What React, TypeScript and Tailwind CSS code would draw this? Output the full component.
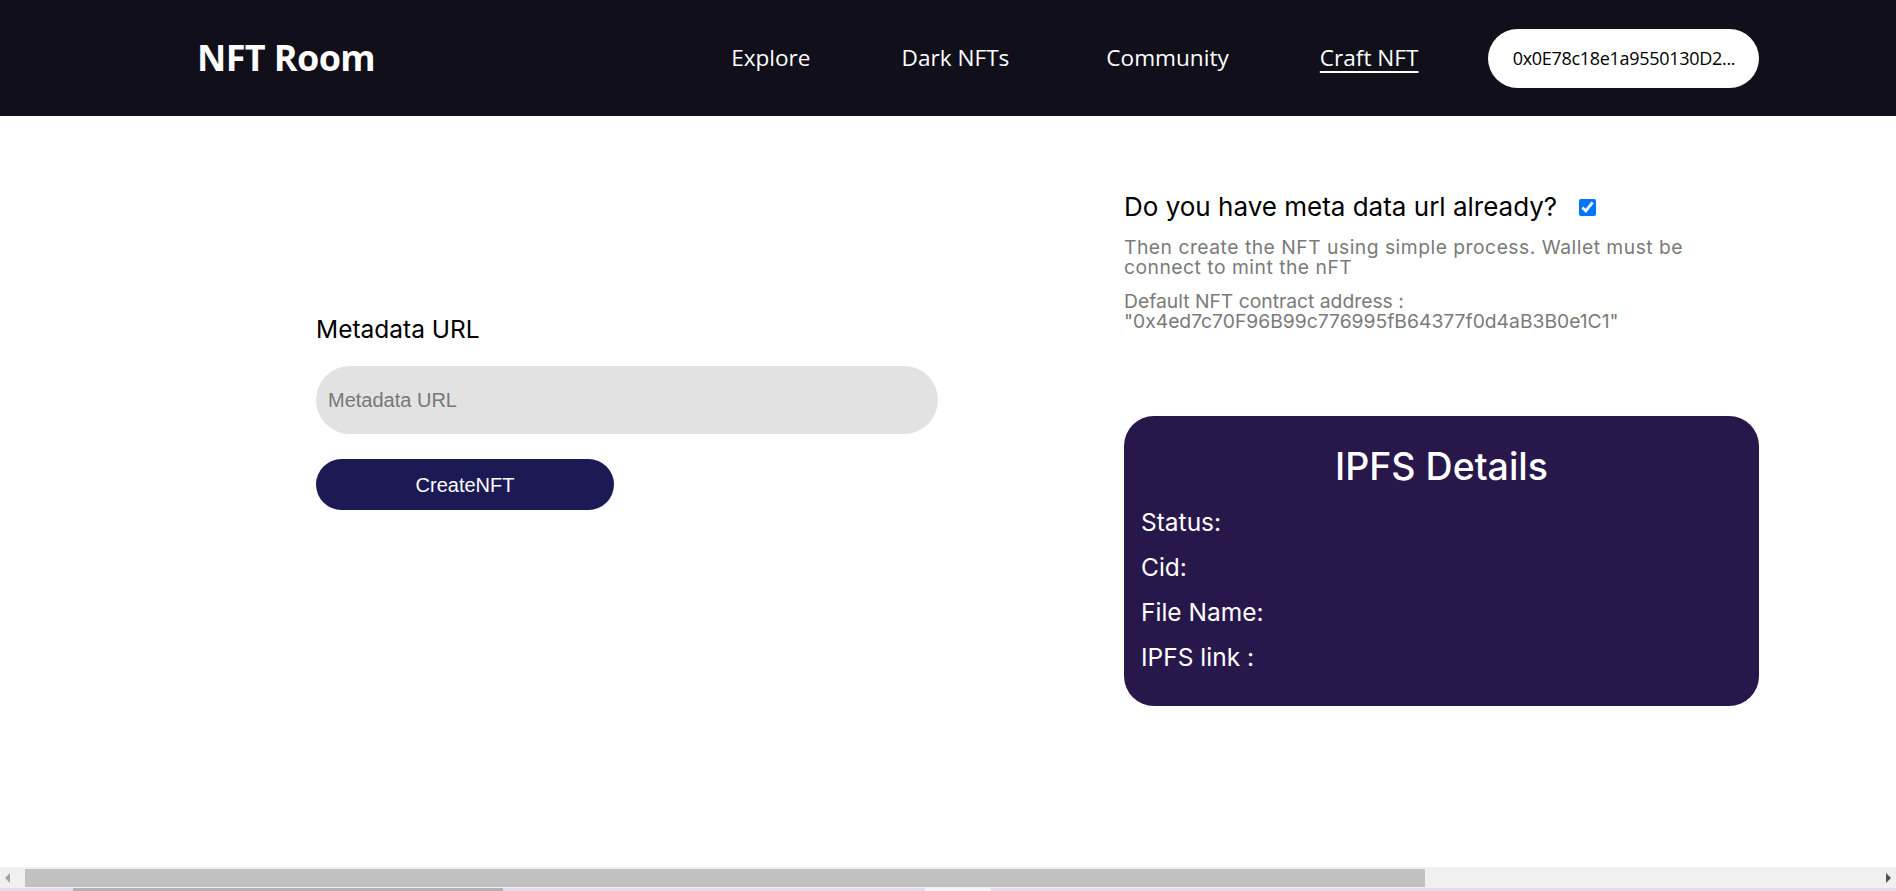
import React from 'react';

const navLinks = [
  { label: 'Explore', className: 'ml-[356px]' },
  { label: 'Dark NFTs', className: 'ml-[91px]' },
  { label: 'Community', className: 'ml-[97px]' },
  { label: 'Craft NFT', className: 'ml-[91px] underline underline-offset-[5px] decoration-[1.5px]' },
];

const ipfsRows = ['Status:', 'Cid:', 'File Name:', 'IPFS link :'];

const ScrollArrow = ({ dir }: { dir: 'left' | 'right' }) => (
  <svg width="8" height="12" viewBox="0 0 8 12" className="shrink-0">
    {dir === 'left' ? (
      <polygon points="6,1 6,11 1,6" fill="#a3a3a3" />
    ) : (
      <polygon points="2,1 2,11 7,6" fill="#505050" />
    )}
  </svg>
);

const App: React.FC = () => {
  return (
    <div className="flex h-[891px] w-full flex-col overflow-hidden bg-white">
      {/* Top navigation */}
      <header
        className="flex h-[116px] shrink-0 items-center bg-[#100f1a] pl-[197px] text-white"
        style={{ fontFamily: '"Open Sans", "Noto Sans", sans-serif' }}
      >
        <h1 className="text-[36px] font-bold leading-none tracking-[-0.6px]">NFT Room</h1>
        <nav className="flex items-center text-[22.6px] leading-none">
          {navLinks.map(link => (
            <a key={link.label} href="#" className={link.className}>
              {link.label}
            </a>
          ))}
        </nav>
        <button className="ml-[70px] flex h-[59px] w-[271px] items-center justify-center rounded-[30px] bg-white text-[18px] tracking-[-0.3px] text-black">
          0x0E78c18e1a9550130D2...
        </button>
      </header>

      {/* Create NFT form */}
      <main className="flex flex-1" style={{ fontFamily: 'Inter, "Noto Sans", sans-serif' }}>
        <div className="ml-[316px] w-[622px] pt-[198px]">
          <label className="block text-[24.5px] leading-[30px] text-black">Metadata URL</label>
          <input
            type="text"
            placeholder="Metadata URL"
            className="mt-[22px] h-[68px] w-full rounded-[34px] bg-[#e2e2e2] px-[12px] text-[20px] text-black outline-none placeholder:text-[#777777]"
            style={{ fontFamily: '"Liberation Sans", Arial, sans-serif' }}
          />
          <button
            className="mt-[25px] h-[51px] w-[298px] rounded-[26px] bg-[#1b1a55] text-[20px] text-white"
            style={{ fontFamily: '"Liberation Sans", Arial, sans-serif' }}
          >
            CreateNFT
          </button>
        </div>

        <div className="ml-[186px] w-[635px] pt-[75px]">
          <div className="flex items-center">
            <span className="text-[26px] leading-[32px] text-black">Do you have meta data url already?</span>
            <input type="checkbox" checked readOnly className="ml-[22px] h-[17px] w-[17px] accent-[#0075ff]" />
          </div>
          <p className="mt-[15px] w-[580px] text-[19.3px] leading-[19.5px] tracking-[0.5px] text-[#7a7a7a]">
            Then create the NFT using simple process. Wallet must be connect to mint the nFT
          </p>
          <p className="mt-[15px] text-[19.3px] leading-[19.5px] text-[#7a7a7a]">
            Default NFT contract address :
            <br />
            "0x4ed7c70F96B99c776995fB64377f0d4aB3B0e1C1"
          </p>

          <section className="mt-[85px] rounded-[30px] bg-[#28174b] pt-[29px] pb-[33px] pl-[17px] text-white">
            <h2 className="pr-[17px] text-center text-[37.5px] font-medium leading-[44px]">IPFS Details</h2>
            <div className="mt-[17px] flex flex-col gap-[13px]">
              {ipfsRows.map(row => (
                <div key={row} className="text-[24.5px] leading-[32px]">
                  {row}
                </div>
              ))}
            </div>
          </section>
        </div>
      </main>

      {/* Horizontal scrollbar strip */}
      <div className="flex h-[21px] shrink-0 items-center bg-[#f0f0f0] px-[4px]">
        <ScrollArrow dir="left" />
        <div className="ml-[13px] h-[18px] w-[1400px] bg-[#c1c1c1]" />
        <div className="flex-1" />
        <ScrollArrow dir="right" />
      </div>
      <div className="flex h-[3px] shrink-0 bg-[#e6d8ec]">
        <div className="ml-[73px] w-[430px] bg-[#b4b0b6]" />
        <div className="ml-[422px] w-[66px] bg-[#f6f0f8]" />
      </div>
    </div>
  );
};

export default App;
